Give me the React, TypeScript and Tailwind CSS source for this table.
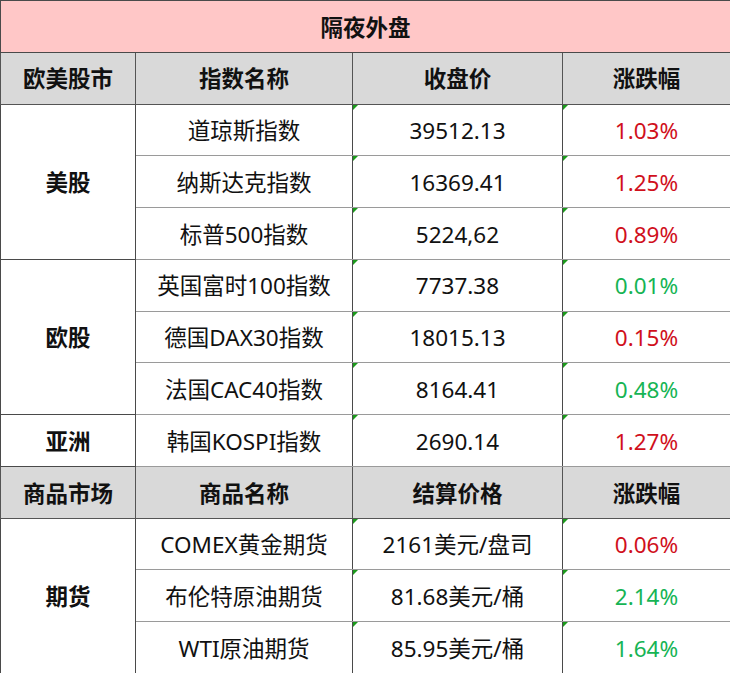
import type { ReactNode } from "react";

type Row = { name: string; price: string; change: string; up: boolean };

const RED = "text-[#d0101c]";
const GREEN = "text-[#16b454]";

const stockGroups: { label: string; rows: Row[] }[] = [
  {
    label: "美股",
    rows: [
      { name: "道琼斯指数", price: "39512.13", change: "1.03%", up: true },
      { name: "纳斯达克指数", price: "16369.41", change: "1.25%", up: true },
      { name: "标普500指数", price: "5224,62", change: "0.89%", up: true },
    ],
  },
  {
    label: "欧股",
    rows: [
      { name: "英国富时100指数", price: "7737.38", change: "0.01%", up: false },
      { name: "德国DAX30指数", price: "18015.13", change: "0.15%", up: true },
      { name: "法国CAC40指数", price: "8164.41", change: "0.48%", up: false },
    ],
  },
  {
    label: "亚洲",
    rows: [{ name: "韩国KOSPI指数", price: "2690.14", change: "1.27%", up: true }],
  },
];

const futures: Row[] = [
  { name: "COMEX黄金期货", price: "2161美元/盘司", change: "0.06%", up: true },
  { name: "布伦特原油期货", price: "81.68美元/桶", change: "2.14%", up: false },
  { name: "WTI原油期货", price: "85.95美元/桶", change: "1.64%", up: false },
];

function Flag() {
  return (
    <span className="absolute left-0 top-0 h-0 w-0 border-r-[5px] border-t-[5px] border-r-transparent border-t-[#1c9a1c]" />
  );
}

function Cell({ children, flag, className = "" }: { children: ReactNode; flag?: boolean; className?: string }) {
  return (
    <td className={`relative border-x border-x-[#4a4a4a] border-y border-y-[#9a9a9a] p-0 pt-[3px] text-center ${className}`}>
      {flag ? <Flag /> : null}
      {children}
    </td>
  );
}

function HeaderRow({ cols }: { cols: string[] }) {
  return (
    <tr className="h-[51.77px] bg-[#d9d9d9] font-bold">
      {cols.map((c) => (
        <td key={c} className="border border-[#555] p-0 pt-[3px] text-center">
          {c}
        </td>
      ))}
    </tr>
  );
}

function DataRows({ label, rows }: { label: string; rows: Row[] }) {
  return (
    <>
      {rows.map((r, i) => (
        <tr key={r.name} className="h-[51.77px]">
          {i === 0 ? (
            <td rowSpan={rows.length} className="border border-[#4a4a4a] p-0 pt-[3px] text-center font-bold">
              {label}
            </td>
          ) : null}
          <Cell>{r.name}</Cell>
          <Cell flag>{r.price}</Cell>
          <Cell flag className={r.up ? RED : GREEN}>
            {r.change}
          </Cell>
        </tr>
      ))}
    </>
  );
}

export default function App() {
  return (
    <div className="h-[673px] w-[730px] overflow-hidden bg-white">
      <table
        className="w-[730px] table-fixed border-collapse border border-[#4a4a4a] text-[22.5px] leading-none text-[#111]"
        style={{ fontFamily: '"Noto Sans", "Noto Sans CJK SC", sans-serif' }}
      >
        <colgroup>
          <col className="w-[135px]" />
          <col className="w-[217px]" />
          <col className="w-[210px]" />
          <col className="w-[168px]" />
        </colgroup>
        <tbody>
          <tr className="h-[51.77px] bg-[#ffc7c7] font-bold">
            <td colSpan={4} className="border border-[#4a4a4a] p-0 pt-[3px] text-center">
              隔夜外盘
            </td>
          </tr>
          <HeaderRow cols={["欧美股市", "指数名称", "收盘价", "涨跌幅"]} />
          {stockGroups.map((g) => (
            <DataRows key={g.label} label={g.label} rows={g.rows} />
          ))}
          <HeaderRow cols={["商品市场", "商品名称", "结算价格", "涨跌幅"]} />
          <DataRows label="期货" rows={futures} />
        </tbody>
      </table>
    </div>
  );
}
